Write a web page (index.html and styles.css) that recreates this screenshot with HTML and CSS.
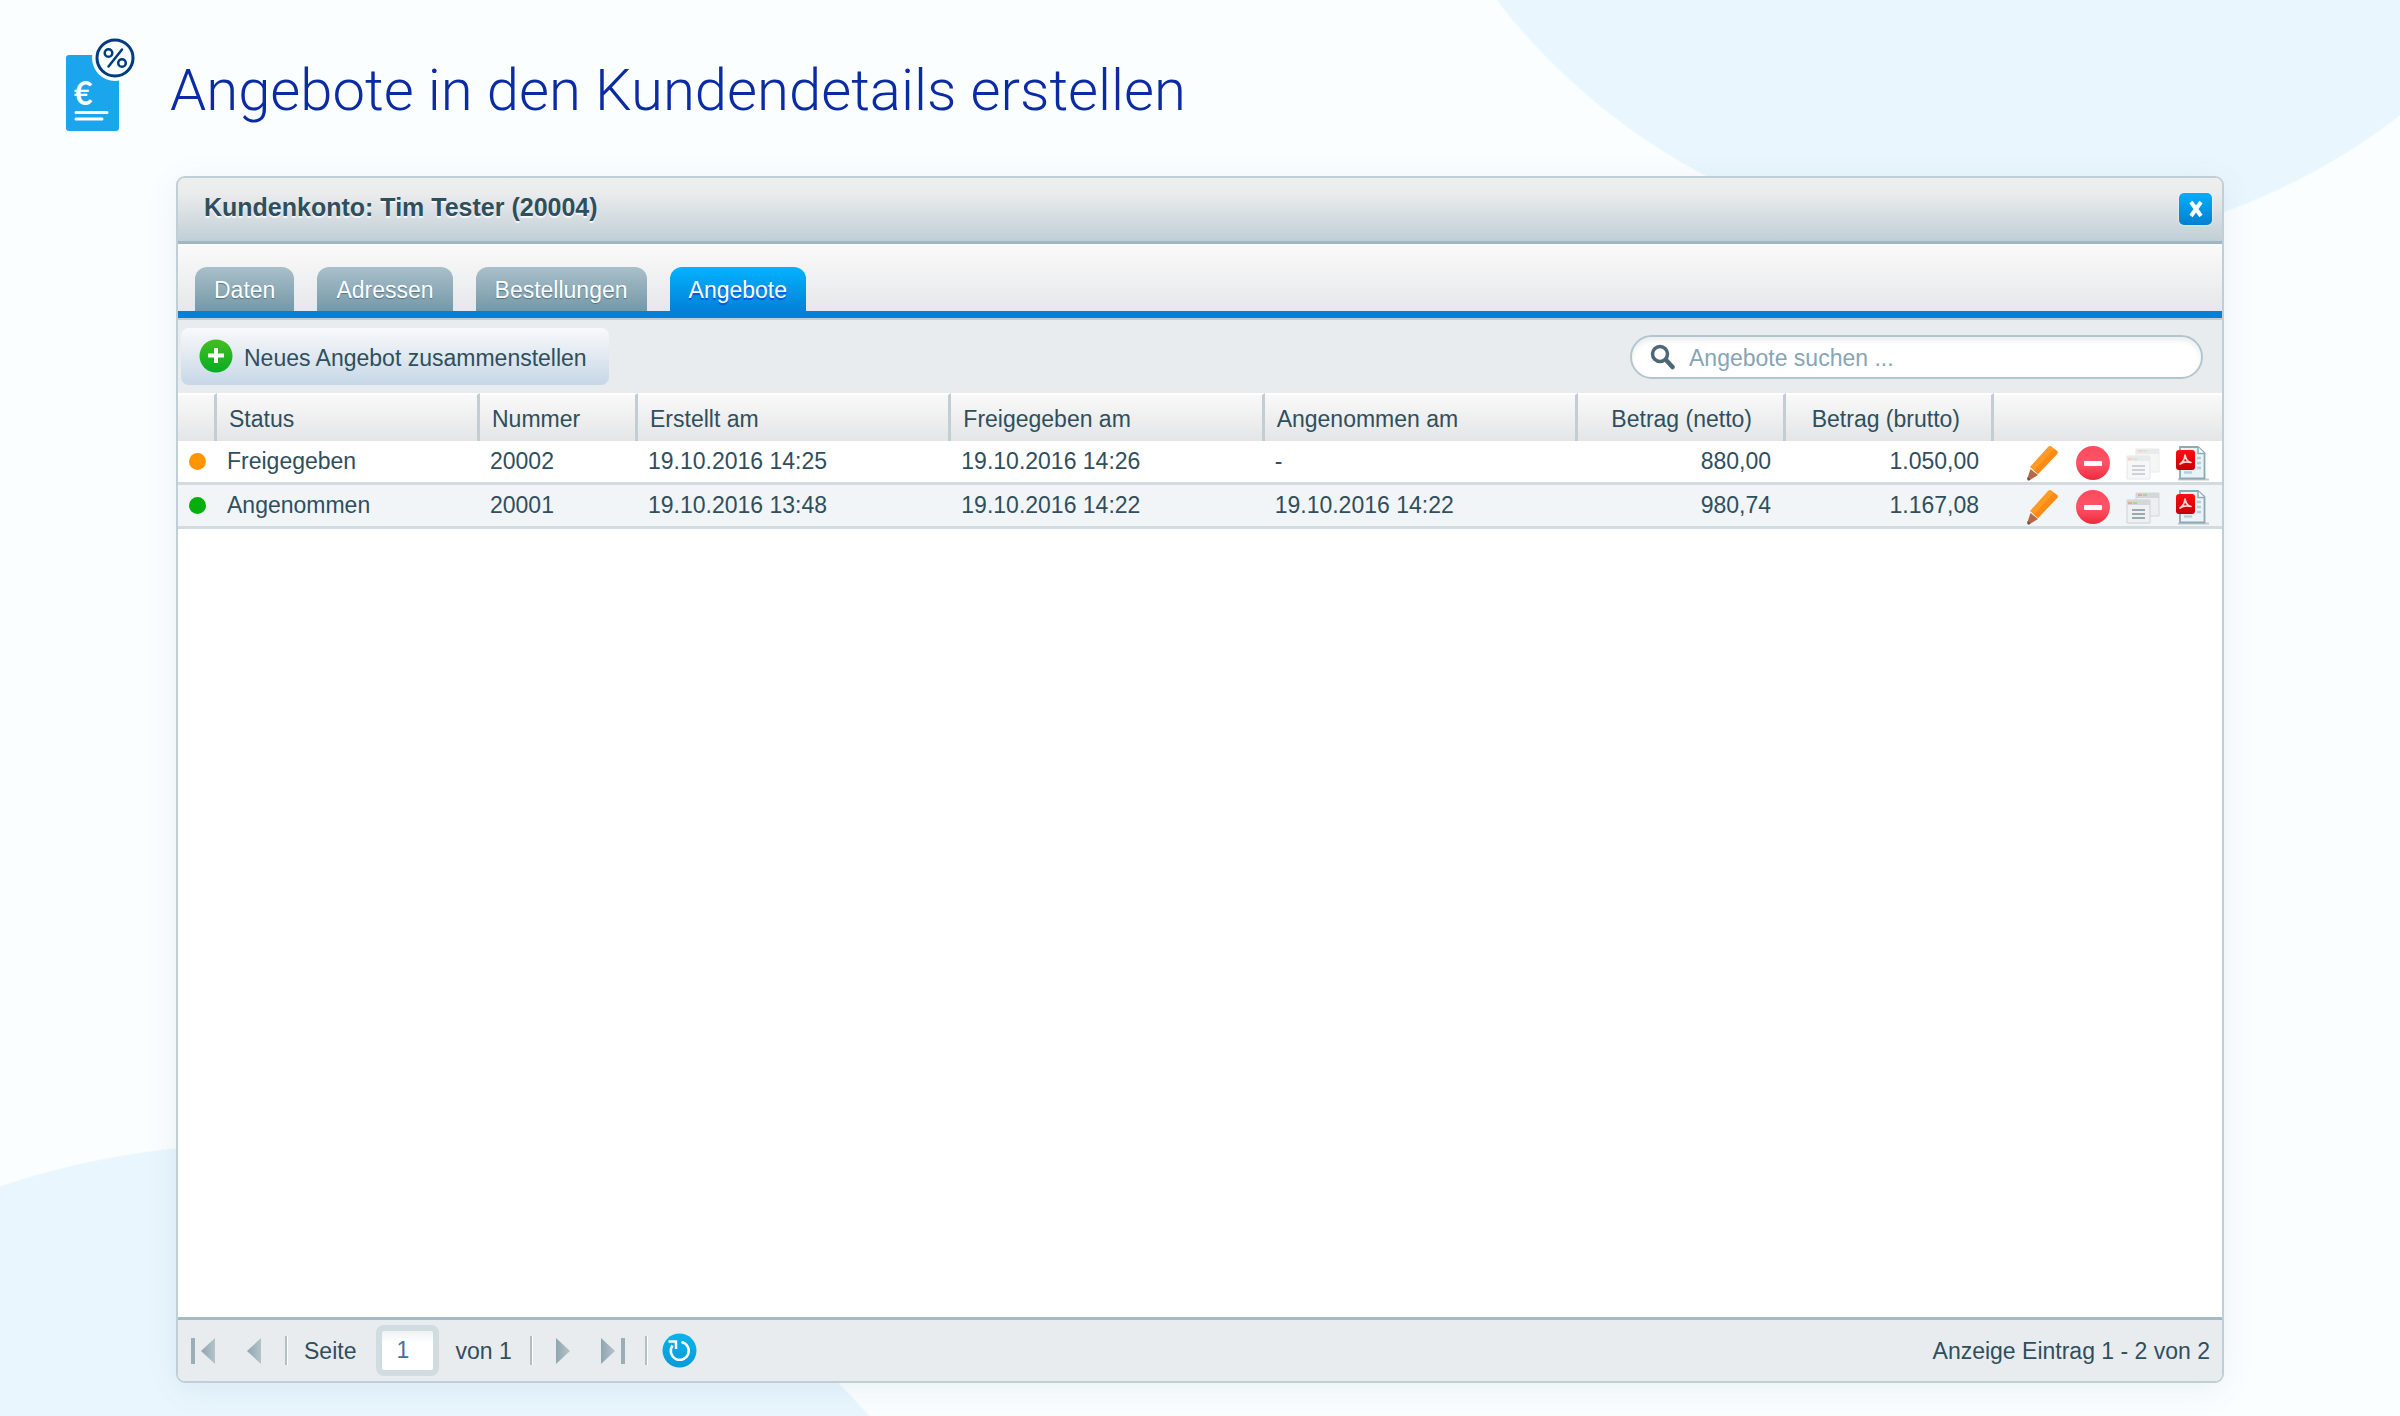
FILE: index.html
```html
<!DOCTYPE html>
<html lang="de">
<head>
<meta charset="utf-8">
<meta name="viewport" content="width=device-width, initial-scale=1">
<title>Angebote in den Kundendetails erstellen</title>
<link rel="stylesheet" href="styles.css">
</head>
<body>
<svg class="sprite" aria-hidden="true">
  <defs>
    <linearGradient id="red" x1="0" y1="0" x2="0" y2="1"><stop offset="0" stop-color="#fb4a5c"/><stop offset=".5" stop-color="#ff5568"/><stop offset="1" stop-color="#f02a3e"/></linearGradient>
    <linearGradient id="pdf-red" x1="0" y1="0" x2="0" y2="1"><stop offset="0" stop-color="#ff0d12"/><stop offset="1" stop-color="#c30006"/></linearGradient>
    <linearGradient id="green" x1="0" y1="0" x2="0" y2="1"><stop offset="0" stop-color="#45bd22"/><stop offset="1" stop-color="#06ad22"/></linearGradient>
    <linearGradient id="blue" x1="0" y1="0" x2="0" y2="1"><stop offset="0" stop-color="#0ab4ea"/><stop offset="1" stop-color="#0799d8"/></linearGradient>
    <linearGradient id="arrow" x1="0" y1="0" x2="1" y2="0"><stop offset="0" stop-color="#8fa6af"/><stop offset="1" stop-color="#b3c3ca"/></linearGradient>
    <symbol id="pencil" viewBox="0 0 36 36">
      <path d="M23 2 Q25 0 27 2 L32 6 Q33.500 7.500 32 9 L13 29 L5 22 Z" fill="#ff9a22"/>
      <path d="M29 4 L32 6 Q33.500 7.500 32 9 L13 29 L9 25.500 Z" fill="#fb8a16"/>
      <path d="M5.500 24 L13 30 L4 35.500 Q2 35.500 2.500 33 Z" fill="#b5694b"/>
      <path d="M2.700 32 L5.500 34.600 L4 35.500 Q2 35.500 2.500 33 Z" fill="#6d4a44"/>
    </symbol>
    <symbol id="minus" viewBox="0 0 36 36">
      <circle cx="18" cy="18" r="17" fill="url(#red)"/>
      <rect x="9" y="16" width="18" height="5" rx="1" fill="#fff"/>
    </symbol>
    <symbol id="copies" viewBox="0 0 36 36">
      <path d="M11 4 H34 V27 H11 Z" fill="#eceeef" stroke="#d3d8da"/>
      <path d="M11 4 H34 V9 H11 Z" fill="#d3d7d9"/>
      <path d="M13 5 h4 v2 h-4z" fill="#f0a58b"/><path d="M18 5 h4 v2 h-4z" fill="#a9d590"/>
      <path d="M2 11 H25 V34 H2 Z" fill="#eef0f1" stroke="#cdd2d5"/>
      <path d="M2 11 H25 V16 H2 Z" fill="#d3d7d9"/>
      <path d="M3 13 h4 v2 h-4z" fill="#f0a58b"/><path d="M8 13 h4 v2 h-4z" fill="#a9d590"/>
      <path d="M7 21 H20 M7 25 H20 M7 29 H20" stroke="#9aa9b1" stroke-width="2"/>
    </symbol>
    <symbol id="pdf" viewBox="0 0 36 36">
      <path d="M3 34.500 H34" stroke="#c2ccd0" stroke-width="2"/>
      <path d="M5 2 H23 L29.500 8 V33.500 H5 Z" fill="#eaf3f7" stroke="#8fa9b2" stroke-width="1.800"/>
      <path d="M23 2 V8.500 H29.500" fill="#fff" stroke="#8fa9b2" stroke-width="1.500"/>
      <path d="M22 13 H26 M22 18 H26 M22 23 H26 M9 27.500 H17" stroke="#b4d0e0" stroke-width="2.500"/>
      <rect x="1" y="5" width="19" height="20" rx="3" fill="url(#pdf-red)"/>
      <path d="M5 19 Q9.500 16 10 10 Q11.500 17 16 17.500 Q10 15.500 5 19 Z" fill="none" stroke="#ffd7d7" stroke-width="1.700" stroke-linejoin="round"/>
    </symbol>
    <symbol id="arrow-left" viewBox="0 0 14 26"><path d="M14 0 V26 L0 13 Z" fill="url(#arrow)"/></symbol>
    <symbol id="arrow-right" viewBox="0 0 14 26"><path d="M0 0 V26 L14 13 Z" fill="url(#arrow)"/></symbol>
  </defs>
</svg>

<header class="page-header">
  <svg class="page-icon" viewBox="0 0 72 96" aria-hidden="true">
    <rect x="1" y="17" width="53" height="76" rx="3" fill="#1ba5ec"/>
    <circle cx="50" cy="20" r="23" fill="#fbfeff"/>
    <circle cx="50" cy="20" r="18" fill="#fbfeff" stroke="#003a80" stroke-width="3"/>
    <g fill="none" stroke="#003a80" stroke-width="2.500"><circle cx="43.500" cy="15" r="3.800"/><circle cx="57" cy="25" r="3.800"/><path d="M57 11.500 L43.500 28.500" stroke-linecap="round"/></g>
    <text x="9" y="67" class="euro">€</text>
    <path d="M11 74.500 H42 M11 81 H37" stroke="#fff" stroke-width="3" stroke-linecap="round"/>
  </svg>
  <h1 class="page-title">Angebote in den Kundendetails erstellen</h1>
</header>

<main class="window">
  <header class="titlebar">
    <h2 class="window-title">Kundenkonto: Tim Tester (20004)</h2>
    <button class="close" type="button" aria-label="Schließen">
      <svg width="18" height="18" viewBox="0 0 18 18"><path d="M4 2 L14 16 M14 2 L4 16" stroke="#fff" stroke-width="4"/></svg>
    </button>
  </header>

  <nav class="tabs">
    <a class="tab" href="#daten">Daten</a>
    <a class="tab" href="#adressen">Adressen</a>
    <a class="tab" href="#bestellungen">Bestellungen</a>
    <a class="tab tab-active" href="#angebote" aria-current="page">Angebote</a>
  </nav>

  <div class="toolbar">
    <button class="new-offer" type="button">
      <svg width="34" height="34" viewBox="0 0 34 34" aria-hidden="true"><circle cx="17" cy="17" r="16.500" fill="url(#green)"/><path d="M17 9 V24 M9 16.500 H25" stroke="#fff" stroke-width="4"/></svg>
      <span>Neues Angebot zusammenstellen</span>
    </button>
    <label class="search">
      <svg width="26" height="26" viewBox="0 0 26 26" aria-hidden="true"><circle cx="10" cy="10" r="7.500" fill="none" stroke="#4d6875" stroke-width="3.500"/><path d="M16 16 L22.500 23" stroke="#4d6875" stroke-width="4.500" stroke-linecap="round"/></svg>
      <input type="search" placeholder="Angebote suchen ..." aria-label="Angebote suchen">
    </label>
  </div>

  <div class="grid">
    <table class="offers">
      <colgroup><col class="c-dot"><col class="c-status"><col class="c-number"><col><col><col><col class="c-amount"><col class="c-amount"><col class="c-actions"></colgroup>
      <thead>
        <tr><th></th><th>Status</th><th>Nummer</th><th>Erstellt am</th><th>Freigegeben am</th><th>Angenommen am</th><th class="amount">Betrag (netto)</th><th class="amount">Betrag (brutto)</th><th></th></tr>
      </thead>
      <tbody>
        <tr>
          <td class="dot-cell"><span class="dot dot-released"></span></td><td>Freigegeben</td><td>20002</td><td>19.10.2016 14:25</td><td>19.10.2016 14:26</td><td>-</td><td class="amount">880,00</td><td class="amount">1.050,00</td>
          <td class="actions-cell"><div class="actions">
            <button type="button" aria-label="Bearbeiten"><svg><use href="#pencil"/></svg></button>
            <button type="button" aria-label="Löschen"><svg><use href="#minus"/></svg></button>
            <button type="button" aria-label="Umwandeln" disabled><svg><use href="#copies"/></svg></button>
            <button type="button" aria-label="PDF öffnen"><svg><use href="#pdf"/></svg></button>
          </div></td>
        </tr>
        <tr>
          <td class="dot-cell"><span class="dot dot-accepted"></span></td><td>Angenommen</td><td>20001</td><td>19.10.2016 13:48</td><td>19.10.2016 14:22</td><td>19.10.2016 14:22</td><td class="amount">980,74</td><td class="amount">1.167,08</td>
          <td class="actions-cell"><div class="actions">
            <button type="button" aria-label="Bearbeiten"><svg><use href="#pencil"/></svg></button>
            <button type="button" aria-label="Löschen"><svg><use href="#minus"/></svg></button>
            <button type="button" aria-label="Umwandeln"><svg><use href="#copies"/></svg></button>
            <button type="button" aria-label="PDF öffnen"><svg><use href="#pdf"/></svg></button>
          </div></td>
        </tr>
      </tbody>
    </table>
  </div>

  <footer class="pager">
    <button class="page-first" type="button" aria-label="Erste Seite"><span class="bar"></span><svg width="14" height="26"><use href="#arrow-left"/></svg></button>
    <button class="page-prev" type="button" aria-label="Vorherige Seite"><svg width="14" height="26"><use href="#arrow-left"/></svg></button>
    <span class="divider"></span>
    <label class="page-label" for="page">Seite</label>
    <input class="page-input" id="page" type="text" value="1">
    <span class="page-total">von 1</span>
    <span class="divider"></span>
    <button class="page-next" type="button" aria-label="Nächste Seite"><svg width="14" height="26"><use href="#arrow-right"/></svg></button>
    <button class="page-last" type="button" aria-label="Letzte Seite"><svg width="14" height="26"><use href="#arrow-right"/></svg><span class="bar"></span></button>
    <span class="divider"></span>
    <button class="refresh" type="button" aria-label="Aktualisieren">
      <svg width="35" height="35" viewBox="0 0 35 35"><circle cx="17.500" cy="17.500" r="17" fill="url(#blue)"/><path d="M19.500 9 A9 9 0 1 1 10.500 12.500" fill="none" stroke="#fff" stroke-width="2.500"/><path d="M6.500 8.500 H14 V16" fill="none" stroke="#fff" stroke-width="2.500"/></svg>
    </button>
    <span class="summary">Anzeige Eintrag 1 - 2 von 2</span>
  </footer>
</main>
</body>
</html>
```
FILE: styles.css
```css
* {
  box-sizing: border-box;
}

body {
  margin: 0;
  min-height: 100vh;
  display: flex;
  flex-direction: column;
  padding-bottom: 33px;
  color: #2f4f5d;
  font: 23px/26px "Liberation Sans", Arial, sans-serif;
  background-color: #fbfeff;
  background-image:
    radial-gradient(circle at calc(100% - 394px) -394px, #e9f6fd 643px, transparent 645px),
    radial-gradient(circle at 260px calc(100% + 547px), #e9f6fd 818px, transparent 820px);
}

button,
input {
  font: inherit;
  color: inherit;
}

button {
  border: 0;
  padding: 0;
  background: none;
  cursor: pointer;
}

svg {
  display: block;
}

.sprite {
  position: absolute;
  width: 0;
  height: 0;
}

/* Page heading */
.page-header {
  display: flex;
  align-items: flex-start;
  gap: 33px;
  padding: 38px 65px 42px;
}

.page-icon {
  width: 72px;
  height: 96px;
}

.euro {
  font: 700 32px Lato, sans-serif;
  fill: #fff;
}

.page-title {
  margin: 0;
  padding-top: 17px;
  font: 300 58px/70px Roboto, sans-serif;
  color: #0a2ba3;
}

/* Window */
.window {
  flex: 1;
  display: flex;
  flex-direction: column;
  margin: 0 176px;
  border: 2px solid #c0ced6;
  border-radius: 9px;
  background: #fff;
  box-shadow: 0 6px 32px rgba(60, 100, 130, 0.09);
  overflow: hidden;
}

.titlebar {
  display: flex;
  justify-content: space-between;
  align-items: flex-start;
  padding: 15px 10px 16px 26px;
  border-bottom: 3px solid #9fb7c2;
  background: linear-gradient(#efefef, #eaebec 25%, #c0cfd7);
}

.window-title {
  margin: 0;
  font-size: 25px;
  line-height: 28px;
  text-shadow: 0 2px 1px rgba(255, 255, 255, 0.8);
}

.close {
  display: grid;
  place-items: center;
  width: 33px;
  height: 32px;
  border-radius: 5px;
  background: linear-gradient(#02b0f8, #037fd0);
  box-shadow: 0 0 2px #fff;
}

.tabs {
  display: flex;
  gap: 23px;
  padding: 23px 17px 0;
  border-bottom: 7px solid #0380da;
  background: linear-gradient(#fafafa, #e6e7e9);
}

.tab {
  padding: 10px 19px 8px;
  border-radius: 12px 12px 0 0;
  background: linear-gradient(#a9c0ca, #7598a7);
  color: #fff;
  text-decoration: none;
  text-shadow: 0 1px 1px #4f7587;
}

.tab-active {
  background: linear-gradient(#03b3fd, #0380da);
  text-shadow: 0 2px 1px #0650e0;
}

.toolbar {
  display: flex;
  justify-content: space-between;
  align-items: center;
  padding: 8px 19px 8px 3px;
  border-top: 2px solid #c4cdd2;
  background: #e9ecef;
}

.new-offer {
  display: flex;
  align-items: center;
  gap: 11px;
  height: 57px;
  padding: 0 22px 2px 18px;
  border-radius: 8px;
  background: linear-gradient(#f8f9fb, #e3eaf1 45%, #c6d7e7);
}

.new-offer span {
  padding-top: 4px;
}

.search {
  display: flex;
  align-items: center;
  gap: 13px;
  width: 573px;
  height: 44px;
  padding: 0 18px;
  border: 2px solid #b3c6cf;
  border-radius: 22px;
  background: #fff;
  box-shadow: inset 0 4px 4px rgba(60, 80, 90, 0.09);
}

.search input {
  flex: 1;
  min-width: 0;
  padding: 2px 0 0;
  border: 0;
  outline: 0;
  background: none;
}

.search input::placeholder {
  color: #86a5b5;
  opacity: 1;
}

/* Offer list */
.grid {
  flex: 1;
}

.offers {
  width: 100%;
  table-layout: fixed;
  border-collapse: separate;
  border-spacing: 0;
}

.c-dot { width: 39px; }
.c-status { width: 263px; }
.c-number { width: 158px; }
.c-amount { width: 208px; }
.c-actions { width: 228px; }

.offers th {
  padding: 11px 12px 9px;
  border-top: 2px solid #fff;
  border-right: 3px solid #c2ced4;
  background: linear-gradient(#f9f9f9, #e4e5e6);
  font-weight: 400;
  text-align: left;
  white-space: nowrap;
}

.offers th:last-child {
  border-right: 0;
}

.offers th.amount {
  padding-right: 31px;
  text-align: right;
}

.offers td {
  height: 44px;
  padding: 7px 10px 8px;
  border-bottom: 3px solid #d1dbe0;
}

.offers td.amount {
  padding-right: 15px;
  text-align: right;
}

.offers tbody tr:nth-child(even) {
  background: #f1f5f8;
}

.offers td.dot-cell {
  padding: 0 11px;
  vertical-align: middle;
}

.dot {
  display: block;
  width: 17px;
  height: 17px;
  border-radius: 50%;
}

.dot-released { background: #ff9500; }
.dot-accepted { background: #04ae0c; }

.offers td.actions-cell {
  padding: 4px 11px 0 0;
  vertical-align: top;
}

.actions {
  display: flex;
  justify-content: flex-end;
  gap: 14px;
}

.actions svg {
  width: 36px;
  height: 36px;
}

.actions button:disabled {
  opacity: 0.5;
}

/* Paging bar */
.pager {
  display: flex;
  align-items: center;
  height: 64px;
  padding: 0 12px 0 13px;
  border-top: 3px solid #a3bac6;
  background: #e9ecef;
}

.page-first,
.page-last {
  display: flex;
  gap: 6px;
}

.bar {
  width: 4px;
  height: 26px;
  background: #9aaeb7;
}

.page-prev {
  margin: 0 24px 0 32px;
}

.divider {
  width: 3px;
  height: 29px;
  border-left: 2px solid #b1c0c7;
  border-right: 1px solid #fff;
}

.page-label {
  margin-left: 16px;
}

.page-input {
  width: 63px;
  height: 51px;
  margin: 0 16px 0 20px;
  padding: 0 14px;
  border: 6px solid #d1dce1;
  border-radius: 8px;
  background: linear-gradient(#eff2f4, #fff 30%);
  color: #41719a;
}

.page-total {
  margin-right: 18px;
}

.page-next {
  margin: 0 31px 0 23px;
}

.page-last {
  margin-right: 20px;
}

.refresh {
  margin-left: 14px;
}

.summary {
  margin-left: auto;
}
```
